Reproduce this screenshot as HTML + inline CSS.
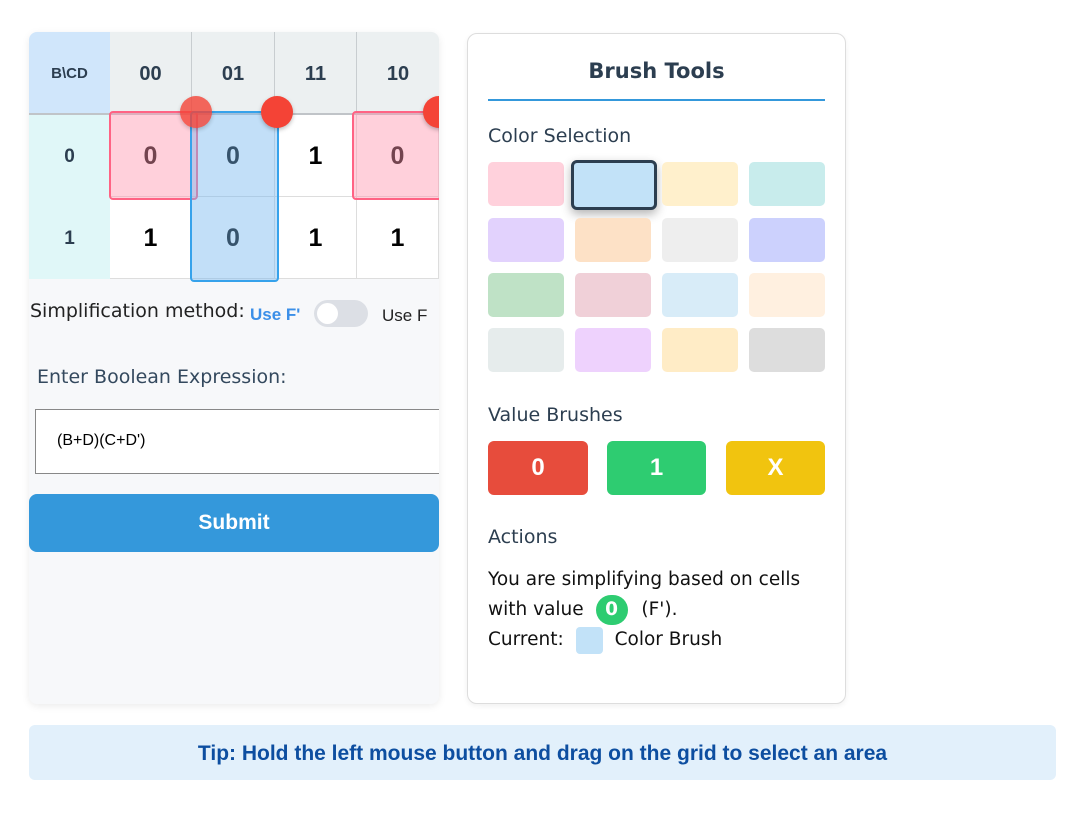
<!DOCTYPE html>
<html><head><meta charset="utf-8"><style>
*{box-sizing:border-box;margin:0;padding:0}
body{width:1086px;height:813px;background:#fff;font-family:"DejaVu Sans","Liberation Sans",sans-serif;position:relative;overflow:hidden;color:#2c3e50}
.abs{position:absolute}
.lp{left:29px;top:32px;width:410px;height:672px;background:#f7f8fa;border-radius:8px;box-shadow:0 2px 8px rgba(0,0,0,.08);overflow:hidden}
.c{position:absolute;display:flex;align-items:center;justify-content:center;font-weight:bold;font-family:"Liberation Sans",sans-serif}
.hd{background:#ecf0f1;color:#2c3e50;font-size:20px;border-right:1px solid #c8cdd0;padding-top:2px}
.rh{background:#e0f7f8;font-size:19px;color:#2c3e50;padding-top:2px}
.cell{background:#fff;font-size:25px;color:#000;border-right:1px solid #ddd;border-bottom:1px solid #ddd;padding-top:2px}
.rp{left:467px;top:33px;width:379px;height:671px;background:#fff;border:1px solid #ddd;border-radius:10px;box-shadow:0 2px 6px rgba(0,0,0,.06)}
.sw{position:absolute;width:76px;height:44px;border-radius:5px}
.dot{position:absolute;width:32px;height:32px;border-radius:50%;background:#f44336;box-shadow:0 2px 4px rgba(0,0,0,.25)}
</style></head><body>
<div class="abs lp">
 <div class="c" style="left:0;top:0;width:81px;height:82px;background:#d0e6fb;font-size:15px;color:#2c3e50">B\CD</div>
 <div class="c hd" style="left:81px;top:0;width:82px;height:82px">00</div>
 <div class="c hd" style="left:163px;top:0;width:83px;height:82px">01</div>
 <div class="c hd" style="left:246px;top:0;width:82px;height:82px">11</div>
 <div class="c hd" style="left:328px;top:0;width:82px;height:82px;border-right:none">10</div>
 <div class="abs" style="left:0;top:81px;width:410px;height:2px;background:#c0c4c8"></div>
 <div class="c rh" style="left:0;top:83px;width:81px;height:82px">0</div>
 <div class="c rh" style="left:0;top:165px;width:81px;height:82px">1</div>
 <div class="c cell" style="left:81px;top:83px;width:82px;height:82px">0</div>
 <div class="c cell" style="left:163px;top:83px;width:83px;height:82px">0</div>
 <div class="c cell" style="left:246px;top:83px;width:82px;height:82px">1</div>
 <div class="c cell" style="left:328px;top:83px;width:82px;height:82px">0</div>
 <div class="c cell" style="left:81px;top:165px;width:82px;height:82px">1</div>
 <div class="c cell" style="left:163px;top:165px;width:83px;height:82px">0</div>
 <div class="c cell" style="left:246px;top:165px;width:82px;height:82px">1</div>
 <div class="c cell" style="left:328px;top:165px;width:82px;height:82px">1</div>
 <div class="abs" style="left:80px;top:79px;width:89px;height:89px;border:2px solid #ff6384;background:rgba(255,150,175,.45);border-radius:4px"></div>
 <div class="abs" style="left:323px;top:79px;width:92px;height:89px;border:2px solid #ff6384;background:rgba(255,150,175,.45);border-radius:4px"></div>
 <div class="abs" style="left:161px;top:79px;width:89px;height:171px;border:2px solid #36a2eb;background:rgba(120,185,240,.45);border-radius:4px"></div>
 <div class="dot" style="left:151px;top:64px;opacity:.8"></div>
 <div class="dot" style="left:232px;top:64px"></div>
 <div class="dot" style="left:394px;top:64px"></div>
 <div class="abs" style="left:1px;top:268px;font-size:19px;color:#222;white-space:nowrap">Simplification method:</div>
 <div class="abs" style="left:221px;top:273px;color:#3b8fe8;font-size:17px;font-weight:bold;font-family:'Liberation Sans',sans-serif">Use F'</div>
 <div class="abs" style="left:285px;top:268px;width:54px;height:27px;border-radius:14px;background:#dcdfe5"><div class="abs" style="left:3px;top:3px;width:21px;height:21px;border-radius:50%;background:#fff"></div></div>
 <div class="abs" style="left:353px;top:274px;font-size:17px;color:#222;font-family:'Liberation Sans',sans-serif">Use F</div>
 <div class="abs" style="left:8px;top:334px;font-size:19px;color:#34495e">Enter Boolean Expression:</div>
 <div class="abs" style="left:6px;top:377px;width:420px;height:65px;background:#fff;border:1px solid #888;font-size:16px;color:#000;padding:22px 0 0 21px;font-family:'Liberation Sans',sans-serif">(B+D)(C+D')</div>
 <div class="c" style="left:0;top:462px;width:410px;height:58px;background:#3498db;border-radius:8px;color:#fff;font-size:21px">Submit</div>
</div>
<div class="abs rp">
 <div class="abs" style="left:0;top:25px;width:377px;text-align:center;font-weight:bold;font-size:21px;color:#2c3e50">Brush Tools</div>
 <div class="abs" style="left:20px;top:65px;width:337px;height:2px;background:#3498db"></div>
 <div class="abs" style="left:20px;top:91px;font-size:19px">Color Selection</div>
 <div class="sw" style="left:20px;top:128px;background:#ffd1dc"></div>
 <div class="sw" style="left:103px;top:126px;width:86px;height:50px;background:#c2e2f8;border:3px solid #2c3e50;border-radius:6px;box-shadow:0 4px 10px rgba(0,0,0,.3)"></div>
 <div class="sw" style="left:194px;top:128px;background:#fff0cc"></div>
 <div class="sw" style="left:281px;top:128px;background:#c8ecec"></div>
 <div class="sw" style="left:20px;top:184px;background:#e2d2fd"></div>
 <div class="sw" style="left:107px;top:184px;background:#fde1c6"></div>
 <div class="sw" style="left:194px;top:184px;background:#eeeeee"></div>
 <div class="sw" style="left:281px;top:184px;background:#ccd1fd"></div>
 <div class="sw" style="left:20px;top:239px;background:#bfe2c6"></div>
 <div class="sw" style="left:107px;top:239px;background:#f0d0d8"></div>
 <div class="sw" style="left:194px;top:239px;background:#d8ecf8"></div>
 <div class="sw" style="left:281px;top:239px;background:#fff0e0"></div>
 <div class="sw" style="left:20px;top:294px;background:#e6ecec"></div>
 <div class="sw" style="left:107px;top:294px;background:#eed2fd"></div>
 <div class="sw" style="left:194px;top:294px;background:#ffecc6"></div>
 <div class="sw" style="left:281px;top:294px;background:#dddddd"></div>
 <div class="abs" style="left:20px;top:370px;font-size:19px">Value Brushes</div>
 <div class="c" style="left:20px;top:407px;width:100px;height:54px;background:#e74c3c;border-radius:6px;color:#fff;font-size:24px">0</div>
 <div class="c" style="left:139px;top:407px;width:99px;height:54px;background:#2ecc71;border-radius:6px;color:#fff;font-size:24px">1</div>
 <div class="c" style="left:258px;top:407px;width:99px;height:54px;background:#f1c40f;border-radius:6px;color:#fff;font-size:24px">X</div>
 <div class="abs" style="left:20px;top:492px;font-size:19px">Actions</div>
 <div class="abs" style="left:20px;top:531px;font-size:18.5px;color:#111;line-height:30px;width:350px;white-space:nowrap">You are simplifying based on cells<br>with value <span style="display:inline-block;width:32px;height:30px;border-radius:15px;background:#2ecc71;color:#fff;text-align:center;font-weight:bold;margin:0 8px 0 6px;vertical-align:middle;line-height:30px">0</span> (F').<br>Current: <span style="display:inline-block;width:27px;height:27px;border-radius:4px;background:#c2e2f8;vertical-align:middle;margin:0 12px 0 6px"></span>Color Brush</div>
</div>
<div class="c" style="left:29px;top:725px;width:1027px;height:55px;background:#e2f0fb;border-radius:6px;color:#0d4ea0;font-size:21px;padding-top:2px">Tip: Hold the left mouse button and drag on the grid to select an area</div>
</body></html>
